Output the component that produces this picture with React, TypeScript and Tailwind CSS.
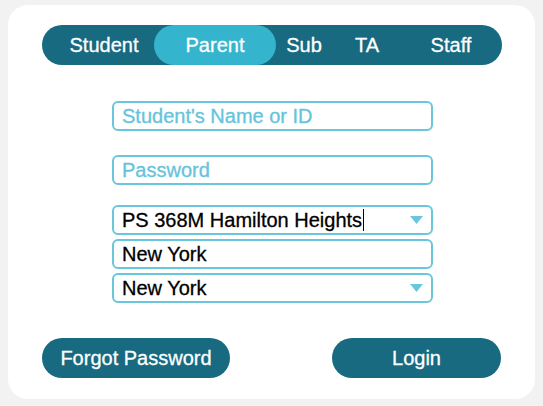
import { useState } from "react";

const tabs = [
  { label: "Student", w: "w-[100px]" },
  { label: "Parent", w: "w-[122px]" },
  { label: "Sub", w: "w-[56px]" },
  { label: "TA", w: "w-[70px]" },
  { label: "Staff", w: "w-[98px]" },
];

function Arrow() {
  return (
    <svg width="13" height="8" viewBox="0 0 13 8" className="shrink-0">
      <path d="M0 0 L13 0 L6.5 8 Z" fill="#6ac6dc" />
    </svg>
  );
}

function Field({ children, arrow }: { children: React.ReactNode; arrow?: boolean }) {
  return (
    <div className="flex h-[30px] items-center rounded-[6px] border-2 border-[#6ac6dc] bg-white pl-[8px] pr-[8px]">
      <div className="flex flex-1 items-center">{children}</div>
      {arrow && <Arrow />}
    </div>
  );
}

export default function App() {
  const [active, setActive] = useState("Parent");

  return (
    <div className="min-h-[406px] w-[543px] bg-[#f2f2f2] pt-[5px] pl-[8px] font-['Liberation_Sans',Arial,sans-serif] [-webkit-text-stroke:0.3px_currentColor]">
      <div className="flex h-[394px] w-[527px] flex-col rounded-[20px] bg-white px-[34px] pt-[20px]">
        <div className="flex h-[40px] w-[460px] items-stretch rounded-full bg-[#176a80] pl-[12px] text-[20px] text-white">
          {tabs.map((t) => (
            <button
              key={t.label}
              onClick={() => setActive(t.label)}
              className={`${t.w} flex items-center justify-center rounded-full ${
                active === t.label ? "bg-[#35b4cd]" : ""
              }`}
            >
              {t.label}
            </button>
          ))}
        </div>

        <div className="ml-[70px] mt-[36px] flex w-[321px] flex-col text-[20px]">
          <Field>
            <span className="text-[#66c3dc]">Student's Name or ID</span>
          </Field>
          <div className="mt-[24px]">
            <Field>
              <span className="text-[#66c3dc]">Password</span>
            </Field>
          </div>
          <div className="mt-[20px] flex flex-col gap-[4px]">
            <Field arrow>
              <span className="text-black">PS 368M Hamilton Heights</span>
              <span className="ml-[1px] h-[22px] w-[1px] bg-black" />
            </Field>
            <Field>
              <span className="text-black">New York</span>
            </Field>
            <Field arrow>
              <span className="text-black">New York</span>
            </Field>
          </div>
        </div>

        <div className="mt-[35px] flex justify-between text-[20px] text-white">
          <button className="flex h-[40px] w-[188px] items-center justify-center rounded-full bg-[#176a80]">
            Forgot Password
          </button>
          <button className="flex h-[40px] w-[169px] items-center justify-center rounded-full bg-[#176a80]">
            Login
          </button>
        </div>
      </div>
    </div>
  );
}
